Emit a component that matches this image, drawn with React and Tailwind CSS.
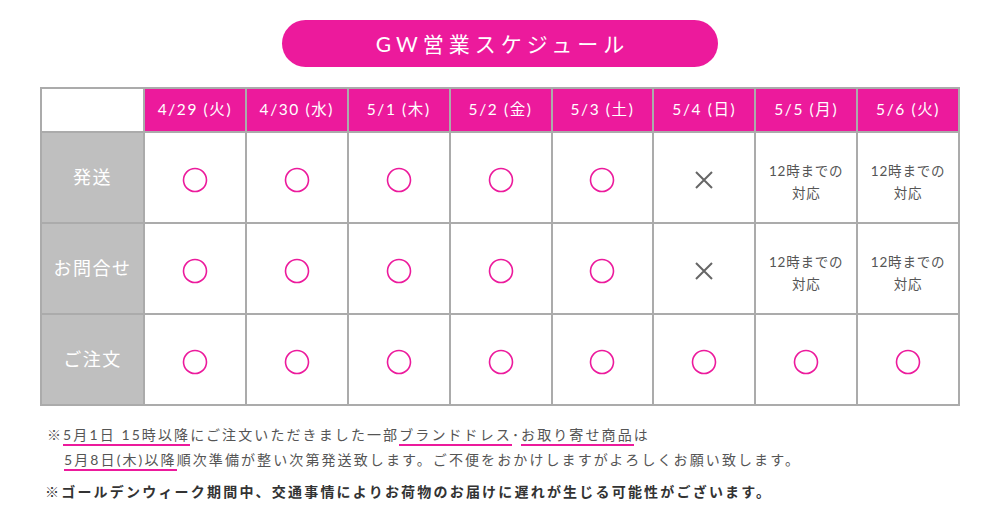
import React from "react";

const PINK = "#ec1a9c";
const days = ["4/29 (火)", "4/30 (水)", "5/1 (木)", "5/2 (金)", "5/3 (土)", "5/4 (日)", "5/5 (月)", "5/6 (火)"];
const rows = [
  { label: "発送", vals: ["o", "o", "o", "o", "o", "x", "t", "t"] },
  { label: "お問合せ", vals: ["o", "o", "o", "o", "o", "x", "t", "t"] },
  { label: "ご注文", vals: ["o", "o", "o", "o", "o", "o", "o", "o"] },
];

function Circle() {
  return (
    <svg width="26" height="26" viewBox="0 0 26 26" className="mt-[5px]">
      <circle cx="13" cy="13" r="11.5" fill="none" stroke={PINK} strokeWidth="1.6" />
    </svg>
  );
}
function Cross() {
  return (
    <svg width="20" height="20" viewBox="0 0 20 20" className="mt-[5px]">
      <path d="M2 2 L18 18 M18 2 L2 18" stroke="#666" strokeWidth="2" />
    </svg>
  );
}

function Cell({ v }) {
  return (
    <div className="bg-white flex items-center justify-center">
      {v === "o" && <Circle />}
      {v === "x" && <Cross />}
      {v === "t" && (
        <div className="mt-[8px] text-[13.5px] leading-[22px] text-[#555] text-center tracking-[0.8px]">
          12時までの
          <br />
          対応
        </div>
      )}
    </div>
  );
}

const U = ({ children }) => (
  <span className="border-b-2 border-[#ec1a9c] pb-[1px]">{children}</span>
);

export default function App() {
  return (
    <div
      className="w-[1000px] h-[526px] bg-white relative overflow-hidden"
      style={{ fontFamily: '"Lato","Noto Sans CJK JP",sans-serif' }}
    >
      <div className="pt-[20px] flex justify-center">
        <div className="w-[436px] h-[47px] rounded-full bg-[#ec1a9c] flex items-center justify-center text-white text-[21px] tracking-[5px] pl-[5px]">
          GW営業スケジュール
        </div>
      </div>

      <div className="mt-[20px] mx-[40px] w-[920px] bg-[#ababab] p-[2px] grid grid-cols-[101px_repeat(8,1fr)] grid-rows-[42px_89px_89px_89px] gap-[2px]">
        <div className="bg-white" />
        {days.map((d) => (
          <div key={d} className="bg-[#ec1a9c] flex items-center justify-center text-white text-[15.5px] tracking-[1.6px]">
            {d}
          </div>
        ))}
        {rows.map((r) => (
          <React.Fragment key={r.label}>
            <div className="bg-[#bfbfbf] flex items-center justify-center text-white text-[18px] tracking-[1.5px]">
              {r.label}
            </div>
            {r.vals.map((v, i) => (
              <Cell key={i} v={v} />
            ))}
          </React.Fragment>
        ))}
      </div>

      <div className="mt-[16px] ml-[47px] text-[14px] text-[#555] tracking-[2.1px] leading-[25px]">
        <div>
          ※<U>5月1日 15時以降</U>にご注文いただきました一部<U>ブランドドレス</U>･<U>お取り寄せ商品</U>は
        </div>
        <div className="pl-[17px]">
          <U>5月8日(木)以降</U>順次準備が整い次第発送致します。ご不便をおかけしますがよろしくお願い致します。
        </div>
      </div>
      <div className="mt-[9px] ml-[45px] text-[14px] font-bold text-[#333] tracking-[2.2px]">
        ※ゴールデンウィーク期間中、交通事情によりお荷物のお届けに遅れが生じる可能性がございます。
      </div>
    </div>
  );
}
